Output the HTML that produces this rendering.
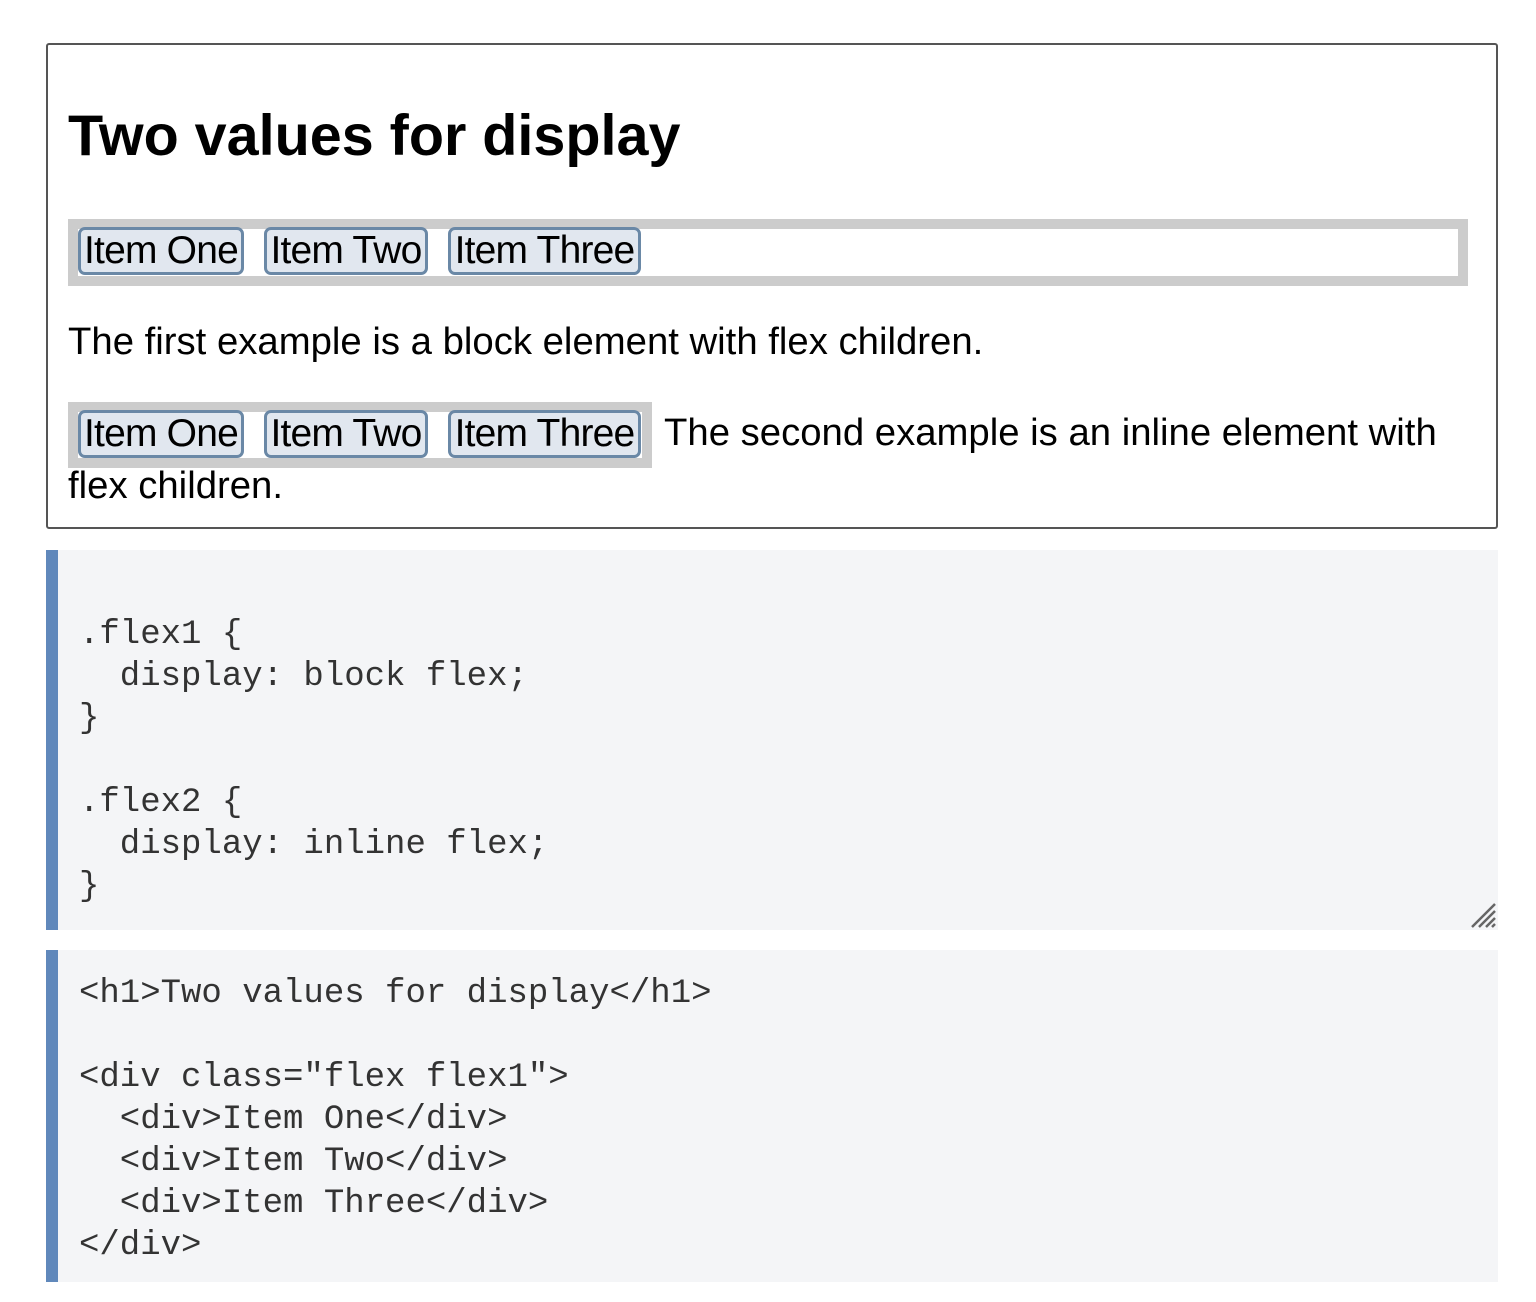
<!DOCTYPE html>
<html><head><style>
body{margin:0;background:#fff;width:1536px;height:1302px;position:relative;font-family:"Liberation Sans",Arial,sans-serif;color:#000}
.out{position:absolute;left:46px;top:43px;width:1448px;height:482px;border:2px solid #555;border-radius:3px}
h1{position:absolute;left:68px;top:104px;margin:0;font-size:57.5px;font-weight:bold;line-height:64px}
.f1{position:absolute;left:68px;top:219px;width:1380px;height:47px;border:10px solid #ccc;background:#fff}
.f2{position:absolute;left:68px;top:402px;width:564px;height:46px;border:10px solid #ccc;background:#fff}
.it{position:absolute;top:-2px;height:42px;border:3px solid #6a88a6;border-radius:7px;background:#e1e7ef;font-size:39px;line-height:42px;text-align:center;letter-spacing:-0.8px;overflow:hidden;white-space:nowrap}
.t{position:absolute;font-size:38.3px;line-height:42px;white-space:nowrap}
.code{position:absolute;left:46px;width:1452px;background:#f4f5f7;border-left:12px solid #6088bb;box-sizing:border-box;font-family:"Liberation Mono","DejaVu Sans Mono",monospace;font-size:34px;color:#333;white-space:pre;line-height:42px;padding-left:21px}
</style></head><body>
<div class="out"></div>
<h1>Two values for display</h1>
<div class="f1">
<div class="it" style="left:0;width:160px">Item One</div>
<div class="it" style="left:186px;width:158px">Item Two</div>
<div class="it" style="left:370px;width:187px">Item Three</div>
</div>
<div class="t" style="left:68px;top:321px">The first example is a block element with flex children.</div>
<div class="f2">
<div class="it" style="left:0;width:160px">Item One</div>
<div class="it" style="left:186px;width:158px">Item Two</div>
<div class="it" style="left:370px;width:187px">Item Three</div>
</div>
<div class="t" style="left:664px;top:412px">The second example is an inline element with</div>
<div class="t" style="left:68px;top:465px">flex children.</div>
<div class="code" style="top:550px;height:380px;padding-top:64px">.flex1 {
  display: block flex;
}

.flex2 {
  display: inline flex;
}</div>
<svg style="position:absolute;left:1470px;top:902px" width="26" height="26"><g stroke="#666" stroke-width="2.5"><line x1="2" y1="25" x2="25" y2="2"/><line x1="9" y1="25" x2="25" y2="9"/><line x1="16" y1="25" x2="25" y2="16"/><line x1="22" y1="25" x2="25" y2="22"/></g></svg>
<div class="code" style="top:950px;height:332px;padding-top:23px">&lt;h1&gt;Two values for display&lt;/h1&gt;

&lt;div class="flex flex1"&gt;
  &lt;div&gt;Item One&lt;/div&gt;
  &lt;div&gt;Item Two&lt;/div&gt;
  &lt;div&gt;Item Three&lt;/div&gt;
&lt;/div&gt;</div>
</body></html>
